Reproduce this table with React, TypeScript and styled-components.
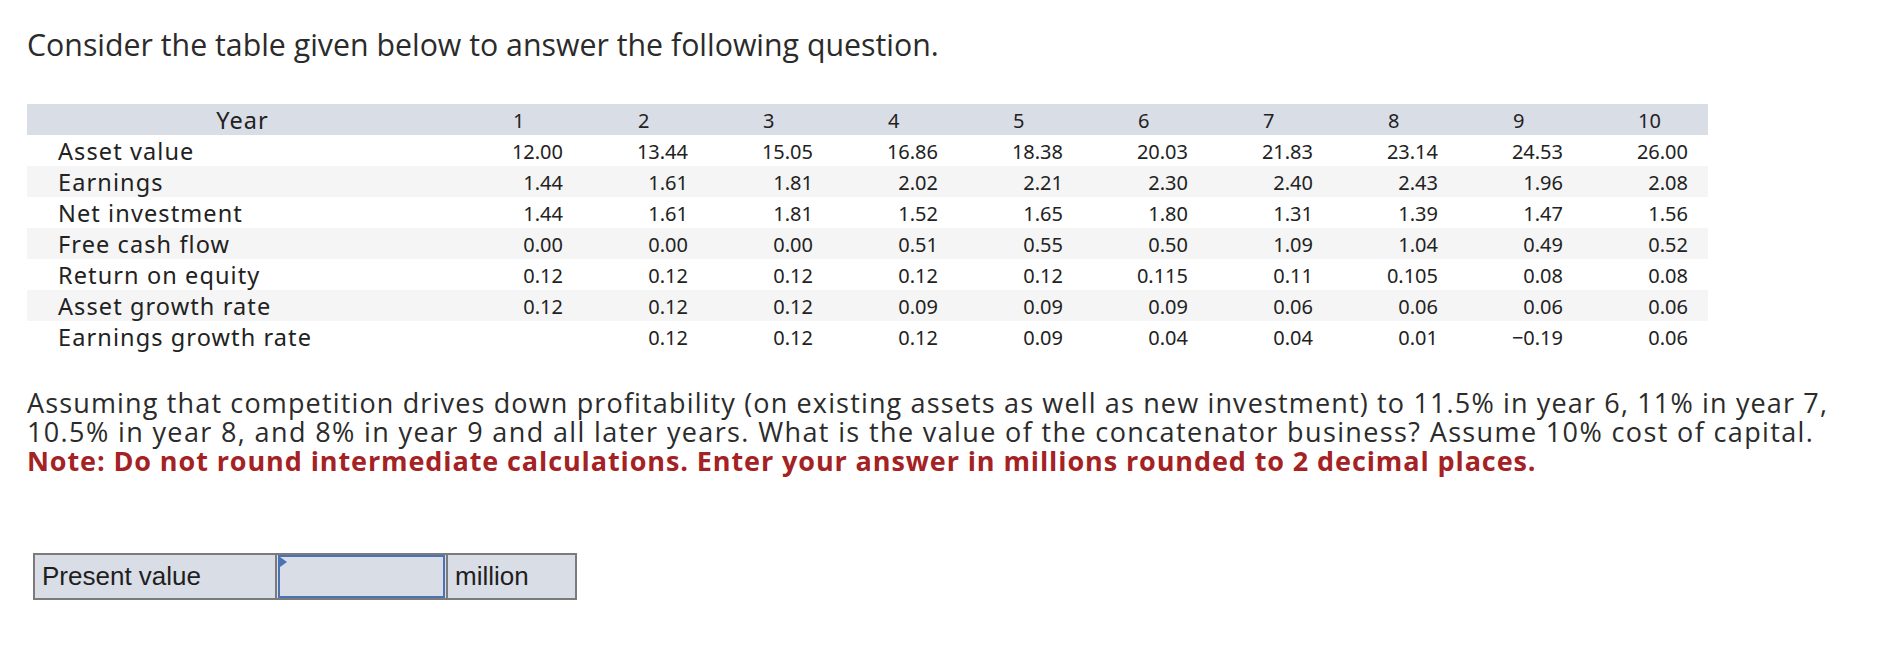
import React from "react";
import styled, { createGlobalStyle } from "styled-components";

const Global = createGlobalStyle`
  html, body { margin: 0; padding: 0; background: #ffffff; }
  body { font-family: "Open Sans", Lato, sans-serif; color: #2b2b2b; }
`;

const Page = styled.main`
  padding: 28px 0 40px 27px;
`;

const Title = styled.h1`
  margin: 0;
  font: 400 30.3px/34px "Open Sans", Lato, sans-serif;
  color: #2b2b2b;
`;

const Table = styled.div`
  margin-top: 42px;
  width: 1681px;
  font-family: "Noto Sans", sans-serif;
  color: #222222;
`;

type Variant = "head" | "plain" | "stripe";

const Row = styled.div<{ $variant: Variant }>`
  display: grid;
  grid-template-columns: 431px repeat(10, 125px);
  height: 31px;
  align-items: center;
  background: ${(p) =>
    p.$variant === "head" ? "#d9dde6" : p.$variant === "stripe" ? "#f5f5f5" : "#ffffff"};
`;

const Label = styled.div<{ $head?: boolean }>`
  font-size: 23.5px;
  letter-spacing: 1.1px;
  white-space: nowrap;
  text-align: ${(p) => (p.$head ? "center" : "left")};
  padding-left: ${(p) => (p.$head ? "0" : "31px")};
`;

const Cell = styled.div<{ $head?: boolean }>`
  font-size: 20px;
  white-space: nowrap;
  text-align: ${(p) => (p.$head ? "left" : "right")};
  padding: ${(p) => (p.$head ? "0 0 0 55px" : "0 20px 0 0")};
`;

const Prompt = styled.p`
  margin: 36px 0 0;
  font: 400 27px/29px "Open Sans", Lato, sans-serif;
  letter-spacing: 1.15px;
  color: #2b2b2b;
  white-space: nowrap;
`;

const Line = styled.span<{ $spacing?: number }>`
  letter-spacing: ${(p) => (p.$spacing ?? 1.15)}px;
`;

const Note = styled.strong`
  color: #a42224;
  font-weight: 700;
  letter-spacing: 0.9px;
`;

const AnswerRow = styled.div`
  margin: 78px 0 0 6px;
  display: inline-flex;
  height: 47px;
  box-sizing: border-box;
  border: 2px solid #7b7b7b;
  background: #d9dde6;
  font: 400 26px "Liberation Sans", Arial, sans-serif;
  color: #1f1f1f;
`;

const AnswerText = styled.div<{ $width: number; $divider?: boolean }>`
  width: ${(p) => p.$width}px;
  box-sizing: border-box;
  display: flex;
  align-items: center;
  padding-left: 7px;
  border-right: ${(p) => (p.$divider ? "2px solid #7b7b7b" : "none")};
`;

const InputCell = styled.div`
  position: relative;
  width: 171px;
  box-sizing: border-box;
  border-right: 2px solid #7b7b7b;
  padding: 0 1px 0 1px;
  display: flex;

  &::before {
    content: "";
    position: absolute;
    left: 3px;
    top: 2px;
    width: 0;
    height: 0;
    border-top: 5px solid transparent;
    border-bottom: 5px solid transparent;
    border-left: 7px solid #4a72b4;
  }
`;

const Input = styled.input`
  flex: 1;
  min-width: 0;
  margin: 0;
  box-sizing: border-box;
  border: 2px solid #4a72b4;
  background: #d9dde6;
  outline: none;
  font: inherit;
`;

const years = ["1", "2", "3", "4", "5", "6", "7", "8", "9", "10"];

const rows: { label: string; values: string[] }[] = [
  { label: "Asset value", values: ["12.00", "13.44", "15.05", "16.86", "18.38", "20.03", "21.83", "23.14", "24.53", "26.00"] },
  { label: "Earnings", values: ["1.44", "1.61", "1.81", "2.02", "2.21", "2.30", "2.40", "2.43", "1.96", "2.08"] },
  { label: "Net investment", values: ["1.44", "1.61", "1.81", "1.52", "1.65", "1.80", "1.31", "1.39", "1.47", "1.56"] },
  { label: "Free cash flow", values: ["0.00", "0.00", "0.00", "0.51", "0.55", "0.50", "1.09", "1.04", "0.49", "0.52"] },
  { label: "Return on equity", values: ["0.12", "0.12", "0.12", "0.12", "0.12", "0.115", "0.11", "0.105", "0.08", "0.08"] },
  { label: "Asset growth rate", values: ["0.12", "0.12", "0.12", "0.09", "0.09", "0.09", "0.06", "0.06", "0.06", "0.06"] },
  { label: "Earnings growth rate", values: ["", "0.12", "0.12", "0.12", "0.09", "0.04", "0.04", "0.01", "\u22120.19", "0.06"] },
];

export default function App() {
  return (
    <Page>
      <Global />
      <Title>Consider the table given below to answer the following question.</Title>
      <Table>
        <Row $variant="head">
          <Label $head>Year</Label>
          {years.map((y) => (
            <Cell key={y} $head>
              {y}
            </Cell>
          ))}
        </Row>
        {rows.map((r, i) => (
          <Row key={r.label} $variant={i % 2 === 1 ? "stripe" : "plain"}>
            <Label>{r.label}</Label>
            {r.values.map((v, j) => (
              <Cell key={j}>{v}</Cell>
            ))}
          </Row>
        ))}
      </Table>
      <Prompt>
        <Line>
          Assuming that competition drives down profitability (on existing assets as well as new investment) to 11.5% in year 6, 11% in year 7,
        </Line>
        <br />
        <Line $spacing={1.37}>
          10.5% in year 8, and 8% in year 9 and all later years. What is the value of the concatenator business? Assume 10% cost of capital.
        </Line>
        <br />
        <Note>Note: Do not round intermediate calculations. Enter your answer in millions rounded to 2 decimal places.</Note>
      </Prompt>
      <AnswerRow>
        <AnswerText $width={242} $divider>
          Present value
        </AnswerText>
        <InputCell>
          <Input type="text" aria-label="Present value" />
        </InputCell>
        <AnswerText $width={127}>million</AnswerText>
      </AnswerRow>
    </Page>
  );
}
